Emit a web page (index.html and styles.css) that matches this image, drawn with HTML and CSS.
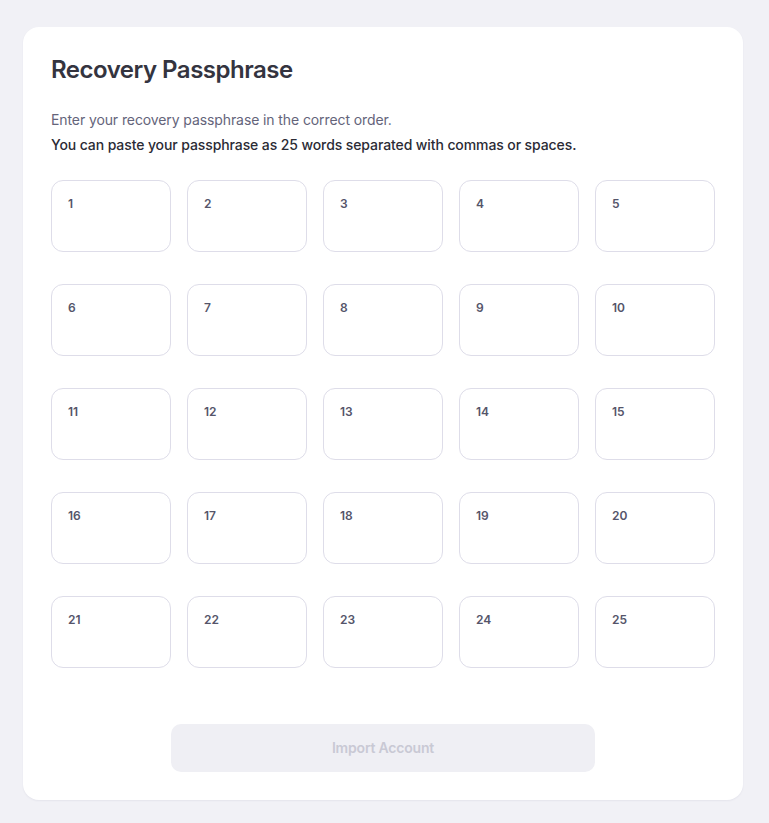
FILE: index.html
```html
<!DOCTYPE html>
<html>
<head>
<meta charset="utf-8">
<link rel="stylesheet" href="styles.css">
</head>
<body>
<div class="card">
  <h1 class="title">Recovery Passphrase</h1>
  <p class="desc">Enter your recovery passphrase in the correct order.</p>
  <p class="desc strong">You can paste your passphrase as 25 words separated with commas or spaces.</p>
  <div class="grid">
    <div class="word">1</div>
    <div class="word">2</div>
    <div class="word">3</div>
    <div class="word">4</div>
    <div class="word">5</div>
    <div class="word">6</div>
    <div class="word">7</div>
    <div class="word">8</div>
    <div class="word">9</div>
    <div class="word">10</div>
    <div class="word">11</div>
    <div class="word">12</div>
    <div class="word">13</div>
    <div class="word">14</div>
    <div class="word">15</div>
    <div class="word">16</div>
    <div class="word">17</div>
    <div class="word">18</div>
    <div class="word">19</div>
    <div class="word">20</div>
    <div class="word">21</div>
    <div class="word">22</div>
    <div class="word">23</div>
    <div class="word">24</div>
    <div class="word">25</div>
  </div>
  <div class="actions">
    <button class="btn" disabled>Import Account</button>
  </div>
</div>
</body>
</html>
```
FILE: styles.css
```css
html, body {
  margin: 0;
  padding: 0;
}
body {
  background: #f1f1f6;
  font-family: Inter, "Noto Sans", sans-serif;
  padding: 27px 26px 23px 23px;
}
.card {
  background: #ffffff;
  border-radius: 16px;
  padding: 28px;
  width: 664px;
  box-shadow: 0 1px 2px rgba(40, 40, 80, 0.06);
}
.title {
  margin: 0;
  font-size: 24px;
  line-height: 30px;
  font-weight: 600;
  color: #34343f;
  letter-spacing: -0.5px;
}
.desc {
  margin: 0;
  font-size: 14px;
  line-height: 25px;
  color: #64647a;
  letter-spacing: -0.1px;
}
.title + .desc {
  margin-top: 22px;
}
.desc.strong {
  color: #2b2b35;
  font-weight: 500;
}
.grid {
  margin-top: 23px;
  display: grid;
  grid-template-columns: repeat(5, 120px);
  column-gap: 16px;
  row-gap: 32px;
}
.word {
  height: 72px;
  border: 1px solid #dedde9;
  border-radius: 12px;
  padding: 14px 16px;
  box-sizing: border-box;
  font-size: 12px;
  line-height: 18px;
  font-weight: 600;
  color: #55556a;
}
.actions {
  margin-top: 56px;
  display: flex;
  justify-content: center;
}
.btn {
  width: 424px;
  height: 48px;
  padding: 0 0 2px;
  border: none;
  border-radius: 10px;
  background: #efeff4;
  color: #c9c9d4;
  font-family: Inter, "Noto Sans", sans-serif;
  font-size: 14px;
  font-weight: 600;
  letter-spacing: -0.2px;
}
```
